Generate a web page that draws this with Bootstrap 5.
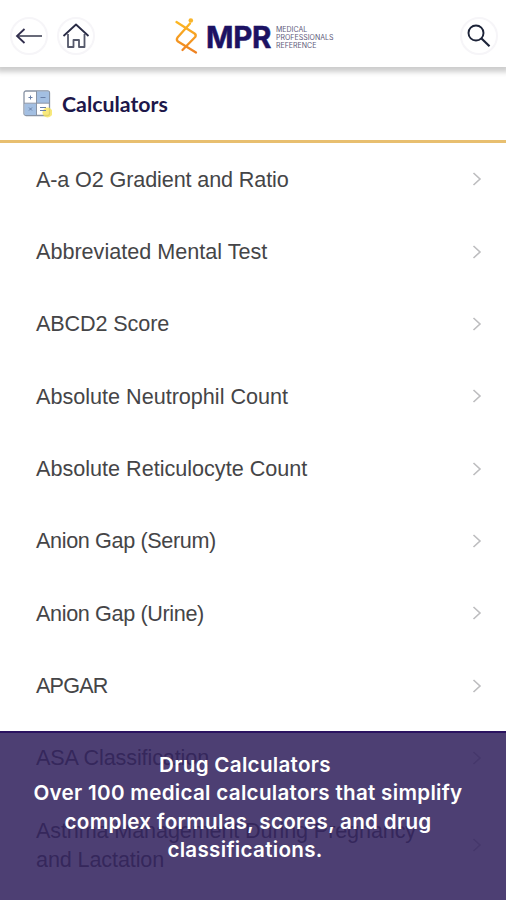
<!DOCTYPE html>
<html lang="en">
<head>
<meta charset="utf-8">
<meta name="viewport" content="width=device-width, initial-scale=1">
<title>MPR Calculators</title>
<link href="https://cdn.jsdelivr.net/npm/bootstrap@5.3.0/dist/css/bootstrap.min.css" rel="stylesheet">
<style>
body{font-family:"Liberation Sans",Arial,sans-serif;height:900px;overflow:hidden;background:#fff}
.topbar{height:67px;padding:4px 8px 0 10px;box-shadow:0 2px 5px 3px rgba(0,0,0,.2);z-index:2}
.topbar-left{gap:9px}
.round-btn{width:38px;height:38px;border:2px solid #f6f5f8;background:#fff;padding:0}
.round-btn svg{display:block}
.brand{left:174px;top:17px;height:38px}
.brand-word{width:65px;margin-left:7px;padding-top:4px;font:700 29.5px/1 Inter,sans-serif;color:#1c1263;letter-spacing:-.3px;white-space:nowrap;-webkit-text-stroke:.5px #1c1263}
.brand-sub{margin-left:5px;padding-top:4px;font:400 7px/8px Inter,sans-serif;color:#5e5a7a}
.brand-sub span{display:block;white-space:nowrap}
.heading{height:76px;padding:1px 0 0 22px;border-bottom:3px solid #e8bf70}
.heading h1{margin:1px 0 0 10px;font:700 21.3px/1 Lato,sans-serif;color:#1d174a}
.calc-list .list-group-item{min-height:72.35px;padding:0 23px 0 36px;border:0;font-size:21.6px;line-height:29px;color:#454547}
.calc-list .two-line{min-height:101px}
.calc-list .snug{letter-spacing:-.12px}
.calc-list .tight{letter-spacing:-.36px}
.calc-list .tighter{letter-spacing:-.8px}
.promo{height:169px;padding-top:18px;background:rgba(50,34,94,.87);border-top:2px solid #2a1260;color:#fff;font:600 20.6px/28.4px Inter,sans-serif;letter-spacing:.3px;z-index:3}
.promo span{display:block;white-space:nowrap;padding-right:10px}
.promo .short{padding-right:16px}
</style>
<script src="https://cdn.jsdelivr.net/npm/bootstrap@5.3.0/dist/js/bootstrap.bundle.min.js"></script>
</head>
<body class="position-relative">
<header class="topbar position-relative bg-white d-flex align-items-center justify-content-between">
  <div class="topbar-left d-flex">
    <button class="round-btn rounded-circle d-flex align-items-center justify-content-center" aria-label="Back"><svg width="28" height="20" viewBox="0 0 28 20" fill="none"><path d="M3 10H27" stroke="#686a79" stroke-width="2"/><path d="M9.500 3L2 10L9.500 17" stroke="#302d4c" stroke-width="1.800"/></svg></button>
    <button class="round-btn rounded-circle d-flex align-items-center justify-content-center" aria-label="Home"><svg width="28" height="28" viewBox="0 0 28 28" fill="none" stroke-width="1.800" stroke-linejoin="round"><path d="M6 12V25H11.500V18H17V25H22.500V12" stroke="#55596b"/><path d="M1.500 14L14 2.500L26.500 14" stroke="#292b45"/></svg></button>
  </div>
  <button class="round-btn rounded-circle d-flex align-items-center justify-content-center" aria-label="Search"><svg width="26" height="26" viewBox="0 0 26 26" fill="none" stroke="#1c2338"><circle cx="10" cy="10" r="7.500" stroke-width="1.900"/><path d="M15.500 15.500L23.500 23.200" stroke-width="2.200"/></svg></button>
  <div class="brand position-absolute d-flex align-items-center">
    <svg class="flex-shrink-0" width="25" height="38" viewBox="0 0 25 38" fill="none"><defs><linearGradient id="helix" x1="0" y1="0" x2="0" y2="38" gradientUnits="userSpaceOnUse"><stop stop-color="#ffc021"/><stop offset="1" stop-color="#ed7d22"/></linearGradient></defs><g stroke="url(#helix)" stroke-width="2.300" stroke-linecap="round" stroke-linejoin="round"><path d="M2.500 5L20.500 16.500Q22.500 18 21.200 20L8.500 33"/><path d="M16 6.500L3.500 20.500Q2 23 4 24.500L22 35.500"/></g><circle cx="16.800" cy="3.500" r="2.300" fill="#f9b52b"/></svg>
    <span class="brand-word">MPR</span>
    <span class="brand-sub"><span>MEDICAL</span><span>PROFESSIONALS</span><span>REFERENCE</span></span>
  </div>
</header>
<section class="heading d-flex align-items-center">
  <svg width="30" height="30" viewBox="0 0 30 30"><rect x="2" y="2" width="25.500" height="24.500" rx="2" fill="#fff" stroke="#8893a4" stroke-width="1.300"/><path d="M15 2.600H27V14H15ZM2.600 14.500H14V26H2.600Z" fill="#a3bfe2"/><path d="M14.500 2V26M2 14.200H27" stroke="#8893a4"/><circle cx="25.500" cy="23.500" r="5" fill="#f6e45d" opacity=".8"/><path d="M6.500 8.500H10.500M8.500 6.500V10.500M18.500 8.500H23.500M7 18.500L10 21.500M10 18.500L7 21.500M18 18.500H24M18 21.500H24" stroke="#687fa8" stroke-width="1" fill="none"/></svg>
  <h1>Calculators</h1>
</section>
<main>
<ul class="calc-list list-group list-group-flush" id="calculators">
  <li class="list-group-item d-flex align-items-center justify-content-between"><span class="snug">A-a O2 Gradient and Ratio</span></li>
  <li class="list-group-item d-flex align-items-center justify-content-between"><span>Abbreviated Mental Test</span></li>
  <li class="list-group-item d-flex align-items-center justify-content-between"><span class="snug">ABCD2 Score</span></li>
  <li class="list-group-item d-flex align-items-center justify-content-between"><span>Absolute Neutrophil Count</span></li>
  <li class="list-group-item d-flex align-items-center justify-content-between"><span>Absolute Reticulocyte Count</span></li>
  <li class="list-group-item d-flex align-items-center justify-content-between"><span class="tight">Anion Gap (Serum)</span></li>
  <li class="list-group-item d-flex align-items-center justify-content-between"><span class="tight">Anion Gap (Urine)</span></li>
  <li class="list-group-item d-flex align-items-center justify-content-between"><span class="tighter">APGAR</span></li>
  <li class="list-group-item d-flex align-items-center justify-content-between"><span class="snug">ASA Classification</span></li>
  <li class="list-group-item two-line d-flex align-items-center justify-content-between"><span class="snug">Asthma Management During Pregnancy<br>and Lactation</span></li>
</ul>
</main>
<aside class="promo position-absolute bottom-0 start-0 w-100 text-center">
  <span class="short">Drug Calculators</span><span>Over 100 medical calculators that simplify</span><span>complex formulas, scores, and drug</span><span class="short">classifications.</span>
</aside>
<script>
document.querySelectorAll('#calculators li').forEach(function(row){
  row.insertAdjacentHTML('beforeend','<svg class="flex-shrink-0" width="12" height="16" viewBox="0 0 12 16" fill="none" stroke="#bdbdbf" stroke-width="1.6"><path d="M2.500 2L9 8L2.500 14"/></svg>');
});
</script>
</body>
</html>
